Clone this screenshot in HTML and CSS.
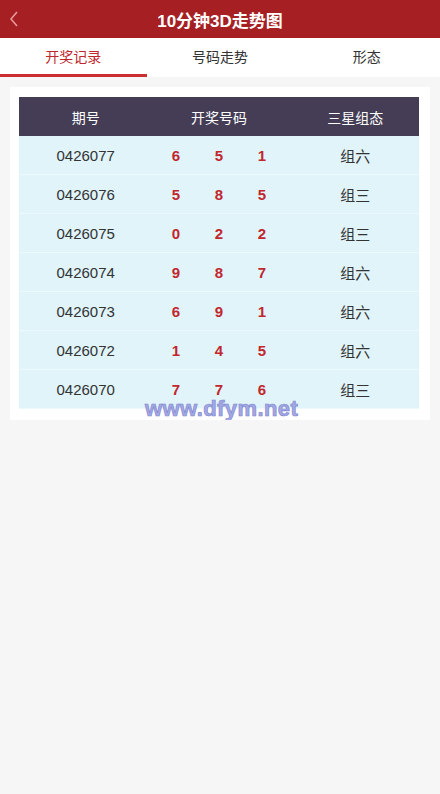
FILE: index.html
```html
<!DOCTYPE html>
<html lang="zh-CN">
<head>
    <meta charset="UTF-8">
    <meta name="viewport" content="width=device-width, initial-scale=1.0">
    <title>10分钟3D走势图</title>
    <link rel="stylesheet" href="styles.css">
</head>
<body>

<div class="top-bar">
    <a class="back" href="#">
        <svg width="12" height="18" viewBox="0 0 12 18"><path d="M9 2 L3 9 L9 16" fill="none" stroke="#e59a9c" stroke-width="1.6"/></svg>
    </a>
    <h1>10分钟3D走势图</h1>
</div>

<div class="tabs">
    <div class="tab active">开奖记录</div>
    <div class="tab">号码走势</div>
    <div class="tab">形态</div>
</div>

<div class="card">
    <table class="draw-table">
        <thead>
            <tr><th>期号</th><th>开奖号码</th><th>三星组态</th></tr>
        </thead>
        <tbody id="rows"></tbody>
    </table>
    <div class="watermark">www.dfym.net</div>
</div>

<script>
    const draws = [
        ['0426077', [6, 5, 1], '组六'],
        ['0426076', [5, 8, 5], '组三'],
        ['0426075', [0, 2, 2], '组三'],
        ['0426074', [9, 8, 7], '组六'],
        ['0426073', [6, 9, 1], '组六'],
        ['0426072', [1, 4, 5], '组六'],
        ['0426070', [7, 7, 6], '组三']
    ];
    const tbody = document.getElementById('rows');
    draws.forEach(d => {
        const tr = document.createElement('tr');
        const nums = d[1].map(n => `<span class="ball">${n}</span>`).join('');
        tr.innerHTML = `<td>${d[0]}</td><td><div class="balls">${nums}</div></td><td>${d[2]}</td>`;
        tbody.appendChild(tr);
    });
</script>

</body>
</html>
```

FILE: styles.css
```css
body {
    font-family: Arial, "Liberation Sans", "Noto Sans CJK SC", sans-serif;
    background-color: #f6f6f6;
    margin: 0;
    padding: 0;
    color: #333;
}
.top-bar {
    height: 38px;
    background-color: #a61f23;
    display: flex;
    align-items: center;
    justify-content: center;
    position: relative;
}
.top-bar h1 {
    margin: 0;
    font-size: 17px;
    font-weight: bold;
    color: #fff;
}
.back {
    position: absolute;
    left: 8px;
    top: 10px;
    display: block;
    line-height: 0;
}
.tabs {
    display: flex;
    background: #fff;
    height: 39px;
}
.tab {
    flex: 1;
    text-align: center;
    font-size: 14px;
    line-height: 39px;
    color: #333;
    box-sizing: border-box;
}
.tab.active {
    color: #c0272d;
    border-bottom: 3px solid #cc2f33;
    line-height: 38px;
}
.card {
    background: #fff;
    margin: 10px 10px 0;
    padding: 10px 11px 11px 9px;
    position: relative;
}
.draw-table {
    width: 100%;
    border-collapse: collapse;
    table-layout: fixed;
}
.draw-table th {
    background-color: #443d55;
    color: #fff;
    font-weight: normal;
    font-size: 14px;
    height: 39px;
    padding: 0;
    text-align: center;
}
.draw-table td {
    background-color: #e0f4fa;
    height: 38px;
    padding: 0;
    font-size: 15px;
    text-align: center;
    border-bottom: 1px solid #eef9fc;
}
.draw-table th:nth-child(3), .draw-table td:nth-child(3) {
    padding-left: 6px;
}
.balls {
    display: flex;
    justify-content: center;
    gap: 33px;
}
.ball {
    color: #c1272d;
    font-weight: bold;
    font-size: 15px;
    width: 10px;
}
.watermark {
    position: absolute;
    left: 135px;
    top: 311px;
    font-size: 22px;
    line-height: 22px;
    font-weight: bold;
    color: #a4a8e4;
    -webkit-text-stroke: 0.7px #8088d0;
    letter-spacing: 0.4px;
}
```
